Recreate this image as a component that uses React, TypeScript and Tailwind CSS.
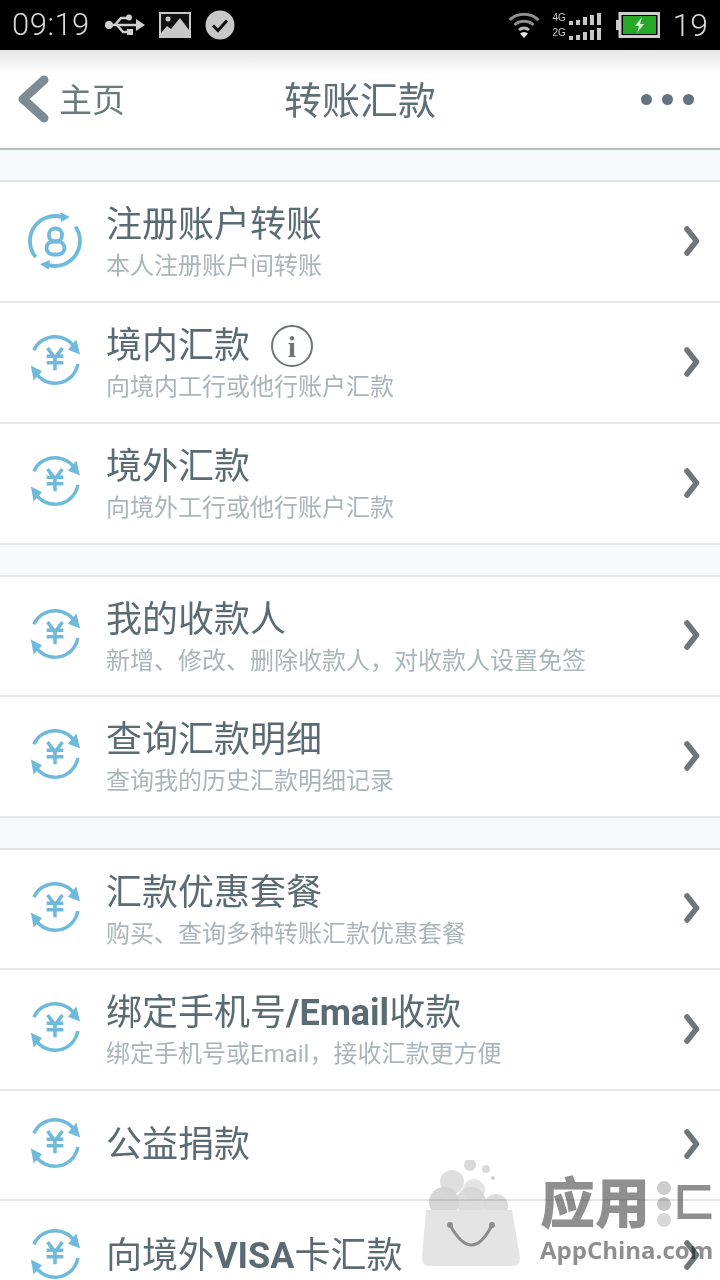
import React from "react";

const cjk = "font-['Roboto','Noto_Sans_CJK_SC',sans-serif]";

type Item = {
  title: string;
  sub?: string;
  icon?: "user";
  info?: boolean;
  height: string;
};

const groups: Item[][] = [
  [
    { title: "注册账户转账", sub: "本人注册账户间转账", icon: "user", height: "h-[121px]" },
    { title: "境内汇款", sub: "向境内工行或他行账户汇款", info: true, height: "h-[121px]" },
    { title: "境外汇款", sub: "向境外工行或他行账户汇款", height: "h-[119px]" },
  ],
  [
    { title: "我的收款人", sub: "新增、修改、删除收款人，对收款人设置免签", height: "h-[120px]" },
    { title: "查询汇款明细", sub: "查询我的历史汇款明细记录", height: "h-[119px]" },
  ],
  [
    { title: "汇款优惠套餐", sub: "购买、查询多种转账汇款优惠套餐", height: "h-[120px]" },
    { title: "绑定手机号/Email收款", sub: "绑定手机号或Email，接收汇款更方便", height: "h-[121px]" },
    { title: "公益捐款", height: "h-[110px]" },
    { title: "向境外VISA卡汇款", height: "h-[110px]" },
  ],
];

function RowIcon({ kind }: { kind?: "user" }) {
  if (kind === "user") {
    return (
      <svg width="56" height="56" viewBox="7 7 56 56" fill="none" stroke="#6fbadb" strokeWidth="3.8" className="shrink-0 mb-[2px]">
        <path d="M15.800 51.100A25 25 0 0 1 41.500 10.900" />
        <path d="M40 6l10 5-9 5z" fill="#6fbadb" stroke="none" />
        <path d="M55.500 20.700A25 25 0 0 1 28.500 59.100" />
        <path d="M20 58l10-4-1 10z" fill="#6fbadb" stroke="none" />
        <rect x="29" y="22.500" width="13" height="13" rx="6" strokeWidth="3.800" />
        <rect x="26.500" y="35.500" width="18" height="13" rx="6.500" strokeWidth="3.800" />
      </svg>
    );
  }
  return (
    <svg width="52" height="52" viewBox="7 7 56 56" fill="none" stroke="#6fbadb" strokeWidth="3.800" className="shrink-0 mx-[2px] mb-[5px]">
      <path d="M12.300 24.400A25 25 0 0 1 57.700 24.400" />
      <path d="M58 13l4 16-13-5z" fill="#6fbadb" stroke="none" />
      <path d="M59.600 39.300A25 25 0 0 1 13.300 47.500" />
      <path d="M12 57l-3-16 12 6z" fill="#6fbadb" stroke="none" />
      <path d="M27 22l8 11 8-11M26 31h18M26 38h18M35 33v13" strokeWidth="3.800" />
    </svg>
  );
}

function Row({ item, last }: { item: Item; last: boolean }) {
  const parts = item.title.split(/([A-Za-z/]+)/);
  return (
    <div className={`${item.height} flex items-center pl-[27px] pr-[20px] ${last ? "" : "border-b-2 border-[#e4e7e8]"}`}>
      <RowIcon kind={item.icon} />
      <div className="ml-[24px] flex-1 min-w-0 -translate-x-[1px]">
        <div className="flex items-center h-[46px]">
          <span className="text-[36px] leading-[40px] text-[#5b6b73] whitespace-nowrap">
            {parts.map((part, i) =>
              i % 2 === 1 ? (
                <span key={i} className="font-bold">{part}</span>
              ) : (
                <span key={i}>{part}</span>
              )
            )}
          </span>
          {item.info && (
            <span className="ml-[21px] w-[42px] h-[42px] rounded-full border-2 border-[#6f7477] flex items-center justify-center text-[30px] font-bold text-[#6f7477] font-['Liberation_Serif',serif]">
              i
            </span>
          )}
        </div>
        {item.sub && (
          <div className="text-[24px] leading-[30px] mt-[3px] text-[#a9b5ba] whitespace-nowrap">{item.sub}</div>
        )}
      </div>
      <svg width="16" height="30" viewBox="0 0 16 30" fill="none" className="shrink-0 mb-[2px]">
        <path d="M3 3 12.500 15 3 27" stroke="#6f7679" strokeWidth="5.500" strokeLinecap="round" strokeLinejoin="round" />
      </svg>
    </div>
  );
}

function StatusBar() {
  return (
    <div className="h-[50px] bg-black flex items-center pl-[12px] pr-[12px] text-[#d8d8d8] shrink-0">
      <span className="text-[31px] font-light font-['Roboto',sans-serif] tracking-[0.5px]">09:19</span>
      <svg width="42" height="26" viewBox="0 0 42 26" className="ml-[14px]" fill="#d0d0d0" stroke="#d0d0d0">
        <circle cx="5" cy="13" r="4" stroke="none" />
        <path d="M5 13h30" strokeWidth="2.500" />
        <path d="M32 7l9 6-9 6z" stroke="none" />
        <path d="M11 13l6-7h6M13 13l6 7h5" strokeWidth="2.500" fill="none" />
        <circle cx="25" cy="5.500" r="3" stroke="none" />
        <rect x="23" y="17" width="6" height="6" stroke="none" />
      </svg>
      <svg width="32" height="26" viewBox="0 0 32 26" className="ml-[13px]">
        <rect x="0" y="0" width="32" height="26" fill="#c8c8c8" />
        <rect x="2" y="2" width="28" height="19" fill="#111" />
        <path d="M2 21 8 14l4 3 9-11 9 12v3z" fill="#c8c8c8" />
        <circle cx="9" cy="7" r="2.500" fill="#c8c8c8" />
      </svg>
      <svg width="30" height="30" viewBox="0 0 30 30" className="ml-[14px]">
        <circle cx="15" cy="15" r="14.500" fill="#c8c8c8" />
        <path d="M8 15.500l5 5 9-10" fill="none" stroke="#111" strokeWidth="3" />
      </svg>
      <div className="flex-1" />
      <svg width="32" height="28" viewBox="0 0 32 28" fill="none" stroke="#8f8f8f" strokeWidth="3">
        <path d="M1.500 9a21 21 0 0 1 29 0" />
        <path d="M6.500 14a14 14 0 0 1 19 0" />
        <path d="M11 19a7.500 7.500 0 0 1 10 0" stroke="#b8b8b8" />
        <path d="M16 27l-4-4.500a6 6 0 0 1 8 0z" fill="#e8e8e8" stroke="none" />
      </svg>
      <div className="ml-[13px] mr-[2px] flex flex-col gap-[1px]">
        {["4G", "2G"].map((label) => (
          <div key={label} className="flex items-end h-[14px]">
            <span className="text-[10px] leading-[14px] w-[14px] text-[#c8c8c8] font-['Liberation_Sans',sans-serif]">{label}</span>
            <div className="flex items-end gap-[3px] ml-[2px]">
              <div className="w-[4px] h-[4px] bg-[#c8c8c8]" />
              <div className="w-[4px] h-[5px] bg-[#c8c8c8]" />
              <div className="w-[4px] h-[8px] bg-[#c8c8c8]" />
              <div className="w-[4px] h-[10px] bg-[#c8c8c8]" />
              <div className="w-[4px] h-[12px] bg-[#c8c8c8]" />
            </div>
          </div>
        ))}
      </div>
      <svg width="44" height="26" viewBox="0 0 44 26" className="ml-[13px]">
        <rect x="0" y="8" width="3" height="10" fill="#c8c8c8" />
        <rect x="4" y="1.500" width="39" height="23" fill="none" stroke="#d0d0d0" strokeWidth="3" />
        <rect x="7" y="4" width="33" height="18" fill="#26a826" />
        <path d="M26 5l-7 9h4l-2 7 7-9h-4z" fill="#dfeedd" />
      </svg>
      <span className="ml-[13px] text-[32px] font-light font-['Roboto',sans-serif] leading-none">19</span>
    </div>
  );
}

function Header() {
  return (
    <div className="h-[100px] shrink-0 border-b-2 border-[#b7c0c0] bg-gradient-to-b from-[#e6e6e6] via-white via-25% to-white grid grid-cols-[1fr_auto_1fr] items-center pl-[16px] pr-[26px]">
      <div className="flex items-center">
        <svg width="34" height="48" viewBox="0 0 34 48" fill="none">
          <path d="M28 5 7 24l21 19" stroke="#7c8b95" strokeWidth="9" strokeLinecap="round" strokeLinejoin="round" />
        </svg>
        <span className="ml-[9px] pt-[4px] text-[33px] text-[#6b7b7d]">主页</span>
      </div>
      <span className="pt-[4px] text-[38px] text-[#5f6f78] translate-x-[5px]">转账汇款</span>
      <div className="flex gap-[10px] justify-end">
        <div className="w-[11px] h-[11px] rounded-full bg-[#63737f]" />
        <div className="w-[11px] h-[11px] rounded-full bg-[#63737f]" />
        <div className="w-[11px] h-[11px] rounded-full bg-[#63737f]" />
      </div>
    </div>
  );
}

function Watermark() {
  return (
    <div className="absolute left-[422px] top-[1160px] w-[298px] h-[120px] flex pointer-events-none mix-blend-multiply">
      <svg width="100" height="110" viewBox="0 0 100 110" className="shrink-0">
        <circle cx="30" cy="22" r="12" fill="#d4d4d4" opacity="0.75" />
        <circle cx="48" cy="5" r="6" fill="#cfcfcf" opacity="0.8" />
        <circle cx="64" cy="9" r="4" fill="#cfcfcf" opacity="0.8" />
        <circle cx="71" cy="18" r="2" fill="#cfcfcf" />
        <circle cx="52" cy="30" r="11" fill="#d9d9d9" opacity="0.7" />
        <circle cx="22" cy="42" r="15" fill="#cfcfcf" opacity="0.85" />
        <circle cx="49" cy="42" r="15" fill="#d6d6d6" opacity="0.85" />
        <circle cx="74" cy="46" r="12" fill="#d6d6d6" opacity="0.85" />
        <path d="M4 50 H90 L98 98 Q98 106 90 106 H8 Q0 106 0 98 Z" fill="#e4e4e4" />
        <path d="M28 65 Q50 105 70 65" fill="none" stroke="#8d8d8d" strokeWidth="3" />
        <circle cx="28" cy="65" r="3" fill="#8d8d8d" />
        <circle cx="70" cy="65" r="3" fill="#8d8d8d" />
      </svg>
      <div className="ml-[18px] flex flex-col">
        <div className="flex items-center h-[56px] mt-[16px] whitespace-nowrap">
          <span className="text-[55px] leading-[56px] font-black text-[#8f8f8f] w-[117px]">应用</span>
          <div className="flex flex-col gap-[2px]">
            <div className="w-[14px] h-[14px] rounded-full bg-[#cdcdcd]" />
            <div className="w-[14px] h-[14px] rounded-full bg-[#c4c4c4]" />
            <div className="w-[14px] h-[14px] rounded-full bg-[#d8d8d8]" />
          </div>
          <span className="text-[40px] leading-[56px] font-black text-[#8f8f8f] ml-[3px]">匚</span>
        </div>
        <span className="mt-[3px] text-[24px] leading-[30px] font-bold text-[#8f8f8f] font-['Open_Sans',sans-serif] whitespace-nowrap">AppChina.com</span>
      </div>
    </div>
  );
}

export default function App() {
  return (
    <div className={`relative w-[720px] h-[1280px] overflow-hidden bg-[#f5f9f9] flex flex-col ${cjk}`}>
      <StatusBar />
      <Header />
      {groups.map((rows, i) => (
        <div key={i} className="mt-[30px] bg-white border-t-2 border-b-2 border-[#e2e6e6] shrink-0">
          {rows.map((item, j) => (
            <Row key={item.title} item={item} last={j === rows.length - 1} />
          ))}
        </div>
      ))}
      <Watermark />
    </div>
  );
}
